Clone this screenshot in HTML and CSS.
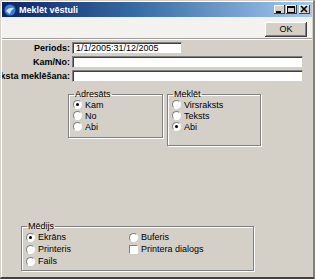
FILE: index.html
```html
<!DOCTYPE html>
<html lang="lv">
<head>
    <meta charset="UTF-8">
    <title>Meklēt vēstuli</title>
    <link rel="stylesheet" href="styles.css">
</head>
<body>
    <div class="window">
        <div class="title-bar">
            <svg class="app-icon" width="12" height="12" viewBox="0 0 12 12">
                <circle cx="6" cy="6" r="5.5" fill="#3a7fd0"/>
                <path d="M2 7 Q5 3 10 4 Q7 6 6 10 Q4 9 2 7 Z" fill="#cfe3f7"/>
            </svg>
            <span class="title-text">Meklēt vēstuli</span>
            <div class="title-buttons">
                <div class="tbtn">
                    <svg width="11" height="9" viewBox="0 0 11 9"><rect x="2" y="6" width="5" height="2" fill="#000"/></svg>
                </div>
                <div class="tbtn">
                    <svg width="11" height="9" viewBox="0 0 11 9"><rect x="1.5" y="1.5" width="7" height="6" fill="none" stroke="#000"/><rect x="1" y="1" width="8" height="2" fill="#000"/></svg>
                </div>
                <div class="tbtn close">
                    <svg width="11" height="9" viewBox="0 0 11 9"><path d="M2 1 L8 7 M8 1 L2 7" stroke="#000" stroke-width="1.6"/></svg>
                </div>
            </div>
        </div>

        <div class="toolbar">
            <button class="btn-ok">OK</button>
        </div>

        <div class="content">
            <div class="form-rows">
                <label class="lbl"><span>Periods:</span></label>
                <div class="field short">1/1/2005:31/12/2005</div>
                <label class="lbl"><span>Kam/No:</span></label>
                <div class="field"></div>
                <label class="lbl"><span>Teksta meklēšana:</span></label>
                <div class="field"></div>
            </div>

            <div class="groups">
                <fieldset class="group adresats">
                    <legend>Adresāts</legend>
                    <div class="opt"><span class="radio checked"></span>Kam</div>
                    <div class="opt"><span class="radio"></span>No</div>
                    <div class="opt"><span class="radio"></span>Abi</div>
                </fieldset>
                <fieldset class="group meklet">
                    <legend>Meklēt</legend>
                    <div class="opt"><span class="radio"></span>Virsraksts</div>
                    <div class="opt"><span class="radio"></span>Teksts</div>
                    <div class="opt"><span class="radio checked"></span>Abi</div>
                </fieldset>
            </div>

            <fieldset class="group medijs">
                <legend>Mēdijs</legend>
                <div class="media-grid">
                    <div class="opt"><span class="radio checked"></span>Ekrāns</div>
                    <div class="opt"><span class="radio"></span>Buferis</div>
                    <div class="opt"><span class="radio"></span>Printeris</div>
                    <div class="opt"><span class="check"></span>Printera dialogs</div>
                    <div class="opt"><span class="radio"></span>Fails</div>
                </div>
            </fieldset>
        </div>
    </div>
</body>
</html>
```

FILE: styles.css
```css
* {
    margin: 0;
    padding: 0;
    box-sizing: border-box;
}

body {
    font-family: 'Liberation Sans', Arial, sans-serif;
    font-size: 9px;
    color: #000;
    background-color: #d4d0c8;
}

.window {
    width: 315px;
    height: 279px;
    background-color: #d4d0c8;
    border-top: 1px solid #d4d0c8;
    border-left: 1px solid #d4d0c8;
    border-right: 2px solid #808080;
    border-bottom: 2px solid #404040;
    box-shadow: inset 1px 1px 0 #fff;
    display: flex;
    flex-direction: column;
    padding: 1px;
}

.title-bar {
    height: 15px;
    background: linear-gradient(to right, #0a246a 0%, #3a6ea5 45%, #a6caf0 100%);
    display: flex;
    align-items: center;
    padding-left: 2px;
}

.app-icon {
    margin-right: 3px;
}

.title-text {
    color: #fff;
    font-weight: bold;
    font-size: 9px;
    flex: 1;
}

.title-buttons {
    display: flex;
    gap: 1px;
    margin-right: 2px;
}

.tbtn {
    width: 11px;
    height: 9px;
    background-color: #d4d0c8;
    box-shadow: inset -1px -1px 0 #404040, inset 1px 1px 0 #fff;
    display: flex;
}

.tbtn.close {
    margin-left: 1px;
}

.toolbar {
    height: 22px;
    background-color: #f3f2ee;
    border-bottom: 1px solid #a0a0a0;
    display: flex;
    justify-content: flex-end;
    align-items: center;
    padding-right: 5px;
    padding-top: 3px;
}

.btn-ok {
    width: 42px;
    height: 15px;
    font-family: 'Liberation Sans', Arial, sans-serif;
    font-size: 9px;
    background-color: #d4d0c8;
    border: none;
    box-shadow: inset -1px -1px 0 #404040, inset 1px 1px 0 #fff, inset -2px -2px 0 #808080;
}

.content {
    flex: 1;
    border-top: 1px solid #fff;
    padding-top: 2px;
}

.form-rows {
    display: grid;
    grid-template-columns: 68px 1fr;
    column-gap: 2px;
    row-gap: 2px;
    padding-right: 9px;
    overflow: hidden;
}

.lbl {
    font-weight: bold;
    white-space: nowrap;
    display: flex;
    justify-content: flex-end;
    overflow: hidden;
    line-height: 12px;
}

.lbl span {
    flex-shrink: 0;
}

.field {
    height: 12px;
    background-color: #fff;
    border-top: 1px solid #808080;
    border-left: 1px solid #808080;
    border-right: 1px solid #d4d0c8;
    border-bottom: 1px solid #d4d0c8;
    box-shadow: inset 1px 1px 0 #404040;
    line-height: 10px;
    padding-left: 3px;
}

.field.short {
    width: 110px;
}

.groups {
    display: flex;
    align-items: flex-start;
    gap: 4px;
    margin-top: 7px;
    padding-left: 66px;
}

.group {
    border: 1px solid #808080;
    box-shadow: 1px 1px 0 #fff, inset 1px 1px 0 #fff;
    padding: 0 0 0 4px;
}

.group legend {
    padding: 0 1px;
    line-height: 10px;
    margin-left: 1px;
}

.adresats {
    width: 95px;
    height: 49px;
}

.meklet {
    width: 94px;
    height: 57px;
}

.opt {
    display: flex;
    align-items: center;
    height: 11px;
    gap: 3px;
}

.radio {
    width: 9px;
    height: 9px;
    border-radius: 50%;
    background-color: #fff;
    border: 1px solid;
    border-color: #808080 #fff #fff #808080;
    display: flex;
    align-items: center;
    justify-content: center;
}

.radio.checked::after {
    content: "";
    width: 3px;
    height: 3px;
    border-radius: 50%;
    background-color: #000;
}

.check {
    width: 9px;
    height: 9px;
    background-color: #fff;
    border: 1px solid;
    border-color: #808080 #fff #fff #808080;
}

.medijs {
    width: 233px;
    height: 50px;
    margin: 75px 0 0 19px;
}

.media-grid {
    display: grid;
    grid-template-columns: 103px 1fr;
}

.media-grid .opt {
    height: 12px;
}
```
